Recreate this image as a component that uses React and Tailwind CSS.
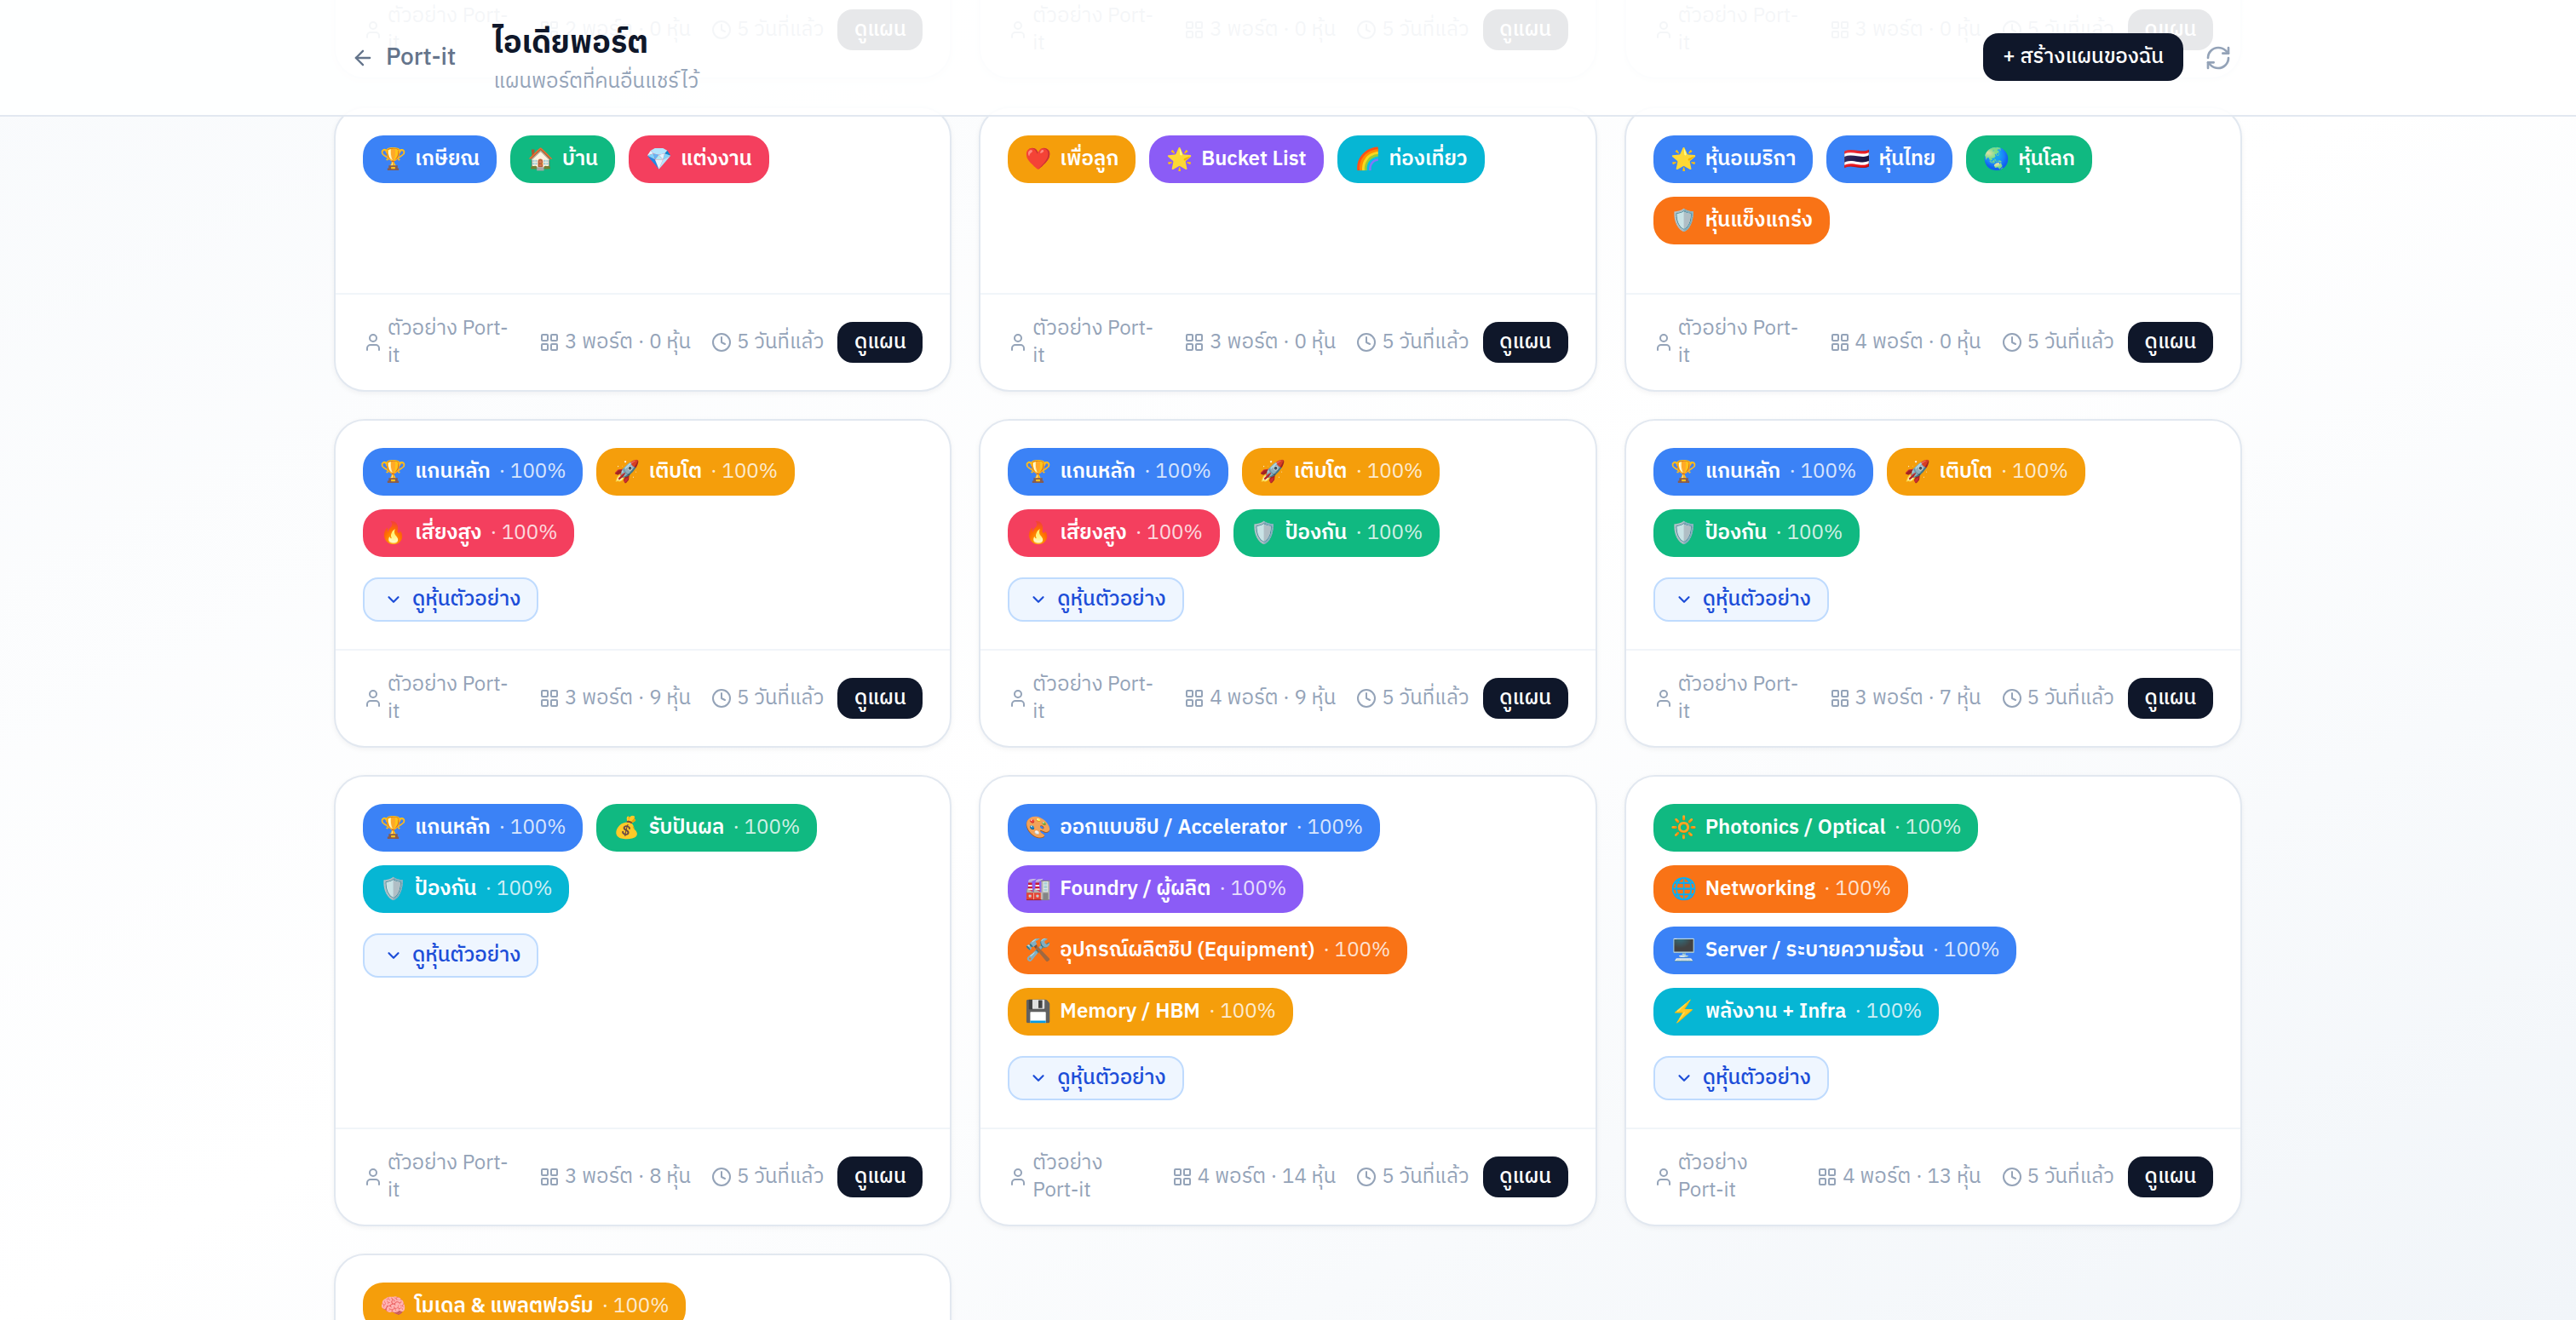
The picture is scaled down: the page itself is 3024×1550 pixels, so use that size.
import React from "react";
import { ArrowLeft, RefreshCw, User, LayoutGrid, Clock, ChevronDown } from "lucide-react";

const BLUE = "bg-[#3b82f6]";
const GREEN = "bg-[#10b981]";
const ROSE = "bg-[#f43f5e]";
const ORANGE = "bg-[#f97316]";
const AMBER = "bg-[#f59e0b]";
const VIOLET = "bg-[#8b5cf6]";
const CYAN = "bg-[#06b6d4]";

const plans = [
  { ports: 2, stocks: 0, chips: [] },
  { ports: 3, stocks: 0, chips: [] },
  { ports: 3, stocks: 0, chips: [] },
  {
    ports: 3,
    stocks: 0,
    chips: [
      ["🏆", "เกษียณ", BLUE],
      ["🏠", "บ้าน", GREEN],
      ["💎", "แต่งงาน", ROSE],
    ],
  },
  {
    ports: 3,
    stocks: 0,
    chips: [
      ["❤️", "เพื่อลูก", AMBER],
      ["🌟", "Bucket List", VIOLET],
      ["🌈", "ท่องเที่ยว", CYAN],
    ],
  },
  {
    ports: 4,
    stocks: 0,
    chips: [
      ["🌟", "หุ้นอเมริกา", BLUE],
      ["🇹🇭", "หุ้นไทย", BLUE],
      ["🌏", "หุ้นโลก", GREEN],
      ["🛡️", "หุ้นแข็งแกร่ง", ORANGE],
    ],
  },
  {
    ports: 3,
    stocks: 9,
    preview: true,
    chips: [
      ["🏆", "แกนหลัก", BLUE, true],
      ["🚀", "เติบโต", AMBER, true],
      ["🔥", "เสี่ยงสูง", ROSE, true],
    ],
  },
  {
    ports: 4,
    stocks: 9,
    preview: true,
    chips: [
      ["🏆", "แกนหลัก", BLUE, true],
      ["🚀", "เติบโต", AMBER, true],
      ["🔥", "เสี่ยงสูง", ROSE, true],
      ["🛡️", "ป้องกัน", GREEN, true],
    ],
  },
  {
    ports: 3,
    stocks: 7,
    preview: true,
    chips: [
      ["🏆", "แกนหลัก", BLUE, true],
      ["🚀", "เติบโต", AMBER, true],
      ["🛡️", "ป้องกัน", GREEN, true],
    ],
  },
  {
    ports: 3,
    stocks: 8,
    preview: true,
    chips: [
      ["🏆", "แกนหลัก", BLUE, true],
      ["💰", "รับปันผล", GREEN, true],
      ["🛡️", "ป้องกัน", CYAN, true],
    ],
  },
  {
    ports: 4,
    stocks: 14,
    preview: true,
    chips: [
      ["🎨", "ออกแบบชิป / Accelerator", BLUE, true],
      ["🏭", "Foundry / ผู้ผลิต", VIOLET, true],
      ["🛠️", "อุปกรณ์ผลิตชิป (Equipment)", ORANGE, true],
      ["💾", "Memory / HBM", AMBER, true],
    ],
  },
  {
    ports: 4,
    stocks: 13,
    preview: true,
    chips: [
      ["🔆", "Photonics / Optical", GREEN, true],
      ["🌐", "Networking", ORANGE, true],
      ["🖥️", "Server / ระบายความร้อน", BLUE, true],
      ["⚡", "พลังงาน + Infra", CYAN, true],
    ],
  },
  {
    ports: 3,
    stocks: 8,
    preview: true,
    chips: [["🧠", "โมเดล & แพลตฟอร์ม", AMBER, true]],
  },
];

const Chip = ({ emoji, label, color, pct }) => (
  <span className={`flex h-14 items-center rounded-3xl px-5 text-2xl font-semibold text-white ${color}`}>
    <span className="mr-3 w-[29px] text-center text-[25px] leading-none">{emoji}</span>
    {label}
    {pct && <span className="ml-[10px] font-normal whitespace-pre opacity-80">· 100%</span>}
  </span>
);

const PlanCard = ({ plan }) => (
  <div className="flex flex-col rounded-[36px] border-2 border-[#e2e8f0] bg-white shadow-[0_2px_6px_rgba(15,23,42,0.05)]">
    <div className="min-h-[217px] flex-1 p-8">
      <div className="flex flex-wrap gap-4">
        {plan.chips.map(([emoji, label, color, pct]) => (
          <Chip key={label} emoji={emoji} label={label} color={color} pct={pct} />
        ))}
      </div>
      {plan.preview && (
        <button className="mt-6 flex h-[52px] items-center gap-[11px] rounded-[18px] border-2 border-[#bfdbfe] bg-[#eff6ff] pr-[19px] pl-[23px] text-2xl font-medium text-[#1d4ed8]">
          <ChevronDown size={22} strokeWidth={2.4} />
          ดูหุ้นตัวอย่าง
        </button>
      )}
    </div>
    <div className="flex items-center gap-4 border-t-2 border-[#f1f5f9] px-8 py-6 text-2xl leading-8 text-[#94a3b8]">
      <div className="flex min-w-0 flex-1 items-center justify-between gap-6">
        <div className="flex min-w-0 items-center gap-[5px]">
          <User size={24} className="shrink-0" />
          <span>ตัวอย่าง Port-it</span>
        </div>
        <div className="flex shrink-0 items-center gap-6">
          <div className="flex items-center gap-1.5 whitespace-nowrap">
            <LayoutGrid size={24} />
            {plan.ports} พอร์ต · {plan.stocks} หุ้น
          </div>
          <div className="flex items-center gap-1.5 whitespace-nowrap">
            <Clock size={24} />
            5 วันที่แล้ว
          </div>
        </div>
      </div>
      <button className="h-12 w-[100px] shrink-0 rounded-[18px] bg-[#0f172a] text-2xl font-medium text-white">ดูแผน</button>
    </div>
  </div>
);

export default function App() {
  return (
    <div className="relative h-[1550px] overflow-hidden bg-gradient-to-br from-[#f8fafc] via-white to-[#f1f5f9] font-['IBM_Plex_Sans_Thai','Noto_Sans_Thai','Noto_Sans',sans-serif]">
      <header className="absolute inset-x-0 top-0 z-10 h-[137px] border-b-2 border-[#e2e8f0] bg-white/90">
        <div className="mx-auto flex h-full w-[2240px] items-center justify-between">
          <div className="flex items-center gap-11">
            <button className="ml-5 flex items-center gap-[13px] text-[28px] font-medium text-[#64748b]">
              <ArrowLeft size={28} />
              Port-it
            </button>
            <div className="pt-1">
              <h1 className="text-4xl leading-[52px] font-bold text-[#0f172a]">ไอเดียพอร์ต</h1>
              <p className="text-2xl leading-[36px] text-[#94a3b8]">แผนพอร์ตที่คนอื่นแชร์ไว้</p>
            </div>
          </div>
          <div className="flex items-center gap-[25px]">
            <button className="mb-[2px] h-14 rounded-[18px] bg-[#0f172a] px-[23px] text-2xl font-medium text-white">+ สร้างแผนของฉัน</button>
            <RefreshCw size={32} className="mr-3 text-[#94a3b8]" />
          </div>
        </div>
      </header>

      <main className="mx-auto -mt-[242px] grid w-[2240px] grid-cols-3 gap-8">
        {plans.map((plan, i) => (
          <PlanCard key={i} plan={plan} />
        ))}
      </main>
    </div>
  );
}
